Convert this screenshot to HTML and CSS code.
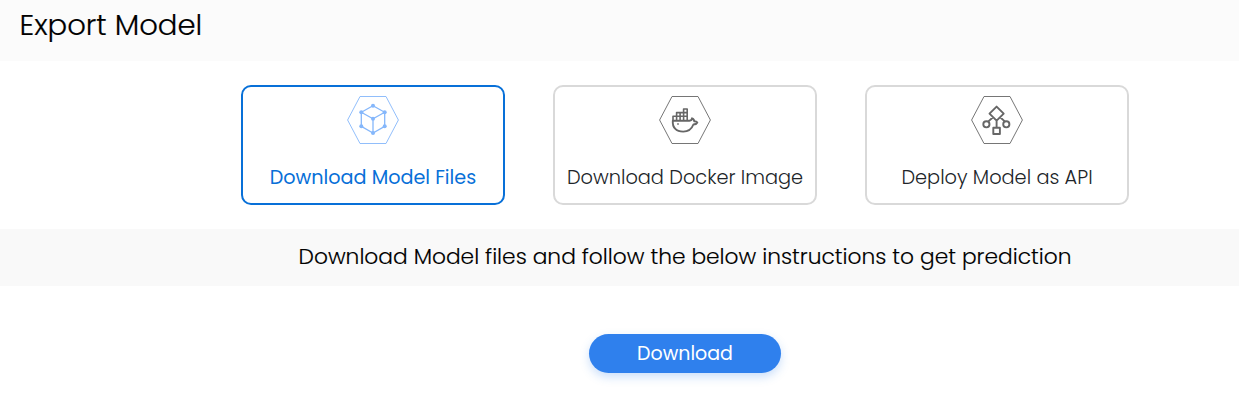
FILE: index.html
```html
<!DOCTYPE html>
<html lang="en">
<head>
<meta charset="utf-8">
<title>Export Model</title>
<link rel="stylesheet" href="styles.css">
</head>
<body>
<main class="page">
  <header class="page-header"><h1 class="title">Export Model</h1></header>
  <section class="options">
    <button class="option option-active">
      <svg class="icon" viewBox="0 0 52 48">
        <path class="hex" d="M.6 24 13 .5H39L51.4 24 39 47.5H13Z"/>
        <path class="cube" d="M26 9.7 37.7 16.3V30.3L26 37 14.3 30.3V16.3ZM14.3 16.3 26 22.7 37.7 16.3M26 22.7V37"/>
        <g class="nodes"><circle cx="26" cy="9.7" r="2"/><circle cx="14.3" cy="16.3" r="2"/><circle cx="37.7" cy="16.3" r="2"/><circle cx="26" cy="22.7" r="2"/><circle cx="14.3" cy="30.3" r="2"/><circle cx="37.7" cy="30.3" r="2"/><circle cx="26" cy="37" r="2"/></g>
      </svg>
      <span class="label">Download Model Files</span>
    </button>
    <button class="option">
      <svg class="icon" viewBox="0 0 52 48">
        <path class="hex" d="M.6 24 13 .5H39L51.4 24 39 47.5H13Z"/>
        <path class="glyph" d="M13.8 24.7H30.5C32.4 24.6 33 23.9 33 22.3 34.6 22.8 35.2 23.8 35.2 25.2 36.6 25.2 37.8 25.6 38.3 26.5 37.6 28 36.2 28.5 34.4 28.5 32.6 33.2 29.3 35.6 24.2 35.6 17 35.6 13.3 31.5 13.8 24.7Z"/>
        <path class="glyph thin" d="M14 24.5V20.3H28.2M17.6 24.5V16.6H28.2M21.1 24.5V16.6M24.6 24.5V13H28.2V24.5M19 27.2V28.8"/>
      </svg>
      <span class="label">Download Docker Image</span>
    </button>
    <button class="option">
      <svg class="icon" viewBox="0 0 52 48">
        <path class="hex" d="M.6 24 13 .5H39L51.4 24 39 47.5H13Z"/>
        <path class="glyph" d="M25.6 10.6 32.7 17.6 25.6 24.7 18.5 17.6ZM25.6 24.5V31.7M22.3 31.7H28.9V38H22.3ZM22 21.3 17.1 25.6M29.2 21.3 34 25.6"/>
        <circle class="glyph" cx="15.4" cy="28.3" r="3.1"/><circle class="glyph" cx="35.3" cy="28.3" r="3.1"/>
      </svg>
      <span class="label">Deploy Model as API</span>
    </button>
  </section>
  <section class="instructions"><p class="hint">Download Model files and follow the below instructions to get prediction</p></section>
  <section class="actions"><button class="download">Download</button></section>
</main>
</body>
</html>
```
FILE: styles.css
```css
* { box-sizing: border-box; }
body {
  margin: 0;
  background: #fff;
  color: #000;
  font-family: Poppins, Inter, "Liberation Sans", sans-serif;
  font-weight: 300;
}
h1, p { margin: 0; font-weight: inherit; }
button { font: inherit; color: inherit; padding: 0; }
.page { height: 415px; }
.page-header { height: 61px; padding: 4px 0 0 19.5px; background: #fbfbfb; }
.title { font-size: 29.1px; line-height: 42px; -webkit-text-stroke: .2px #000; }
.options { display: flex; justify-content: center; gap: 48px; padding: 24px 0 24px 131px; }
.option {
  display: flex;
  flex-direction: column;
  align-items: center;
  width: 264px;
  height: 120px;
  padding-top: 9px;
  border: 2px solid #d9d9d9;
  border-radius: 10px;
  background: #fff;
  color: #212529;
}
.option-active { border-color: #0870d8; color: #0870d8; font-weight: 400; }
.icon { width: 52px; height: 48px; fill: none; stroke: #666; }
.option-active .icon { stroke: #85b7fb; }
.hex { stroke-width: .9; }
.cube { stroke-width: 1.3; }
.nodes { fill: #85b7fb; stroke: none; }
.glyph { stroke-width: 1.9; stroke-linejoin: round; }
.thin { stroke-width: 1.6; }
.label { margin-top: 20px; font-size: 19.35px; line-height: 28px; white-space: nowrap; }
.option-active .label { font-size: 19.2px; }
.instructions { height: 57px; padding: 11px 0 0 131px; background: #f9f9f9; text-align: center; }
.hint { font-size: 21.75px; line-height: 34px; -webkit-text-stroke: .15px #000; }
.actions { display: flex; justify-content: center; padding: 48px 0 0 131px; }
.download {
  width: 192px;
  height: 39px;
  border: 0;
  border-radius: 20px;
  background: #2f80ed;
  box-shadow: 0 4px 10px rgba(47, 128, 237, .25);
  color: #fff;
  font-size: 19px;
  font-weight: 400;
}
```
